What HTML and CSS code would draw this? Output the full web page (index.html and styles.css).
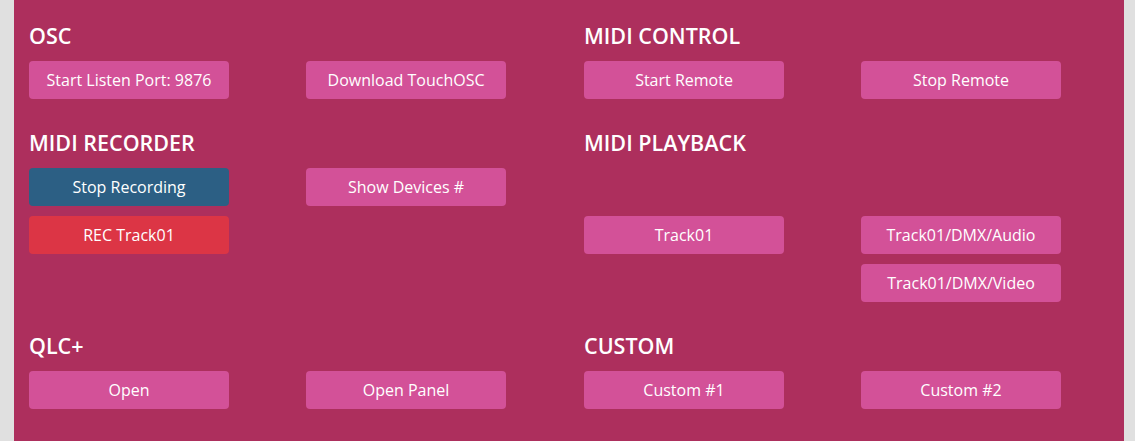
FILE: index.html
```html
<!DOCTYPE html>
<html>
<head>
<meta charset="utf-8">
<link rel="stylesheet" href="styles.css">
</head>
<body>
<div class="panel">
  <div class="row">
    <section class="sec">
      <h2 class="title">OSC</h2>
      <div class="btns">
        <button class="btn">Start Listen Port: 9876</button>
        <button class="btn">Download TouchOSC</button>
      </div>
    </section>
    <section class="sec">
      <h2 class="title">MIDI CONTROL</h2>
      <div class="btns">
        <button class="btn">Start Remote</button>
        <button class="btn">Stop Remote</button>
      </div>
    </section>
  </div>
  <div class="row">
    <section class="sec">
      <h2 class="title">MIDI RECORDER</h2>
      <div class="btns">
        <button class="btn btn-blue">Stop Recording</button>
        <button class="btn">Show Devices #</button>
        <button class="btn btn-red">REC Track01</button>
      </div>
    </section>
    <section class="sec">
      <h2 class="title">MIDI PLAYBACK</h2>
      <div class="btns">
        <div class="slot"></div>
        <div class="slot"></div>
        <button class="btn">Track01</button>
        <button class="btn">Track01/DMX/Audio</button>
        <div class="slot"></div>
        <button class="btn">Track01/DMX/Video</button>
      </div>
    </section>
  </div>
  <div class="row">
    <section class="sec">
      <h2 class="title">QLC+</h2>
      <div class="btns">
        <button class="btn">Open</button>
        <button class="btn">Open Panel</button>
      </div>
    </section>
    <section class="sec">
      <h2 class="title">CUSTOM</h2>
      <div class="btns">
        <button class="btn">Custom #1</button>
        <button class="btn">Custom #2</button>
      </div>
    </section>
  </div>
</div>
</body>
</html>
```

FILE: styles.css
```css
html, body {
  margin: 0;
  padding: 0;
  height: 100%;
}
body {
  background: #e0e0e0;
  font-family: "Open Sans", "DejaVu Sans", sans-serif;
}
.panel {
  margin-left: 14px;
  width: 1110px;
  min-height: 100%;
  box-sizing: border-box;
  background: #ad2f5d;
  padding: 23px 15px 0 15px;
}
.row {
  display: grid;
  grid-template-columns: 555px 555px;
  margin-bottom: 31px;
}
.title {
  margin: 0 0 13px 0;
  font-size: 21.5px;
  line-height: 25px;
  font-weight: 600;
  color: #ffffff;
}
.btns {
  display: grid;
  grid-template-columns: 277px 277px;
  row-gap: 10px;
}
.btn, .slot {
  width: 200px;
  height: 38px;
}
.btn {
  border: none;
  border-radius: 4px;
  background: #d35198;
  color: #ffffff;
  font-family: "Open Sans", "DejaVu Sans", sans-serif;
  font-size: 16px;
  padding: 0;
  text-align: center;
}
.btn-blue {
  background: #2c5f84;
}
.btn-red {
  background: #dc3545;
}
```
